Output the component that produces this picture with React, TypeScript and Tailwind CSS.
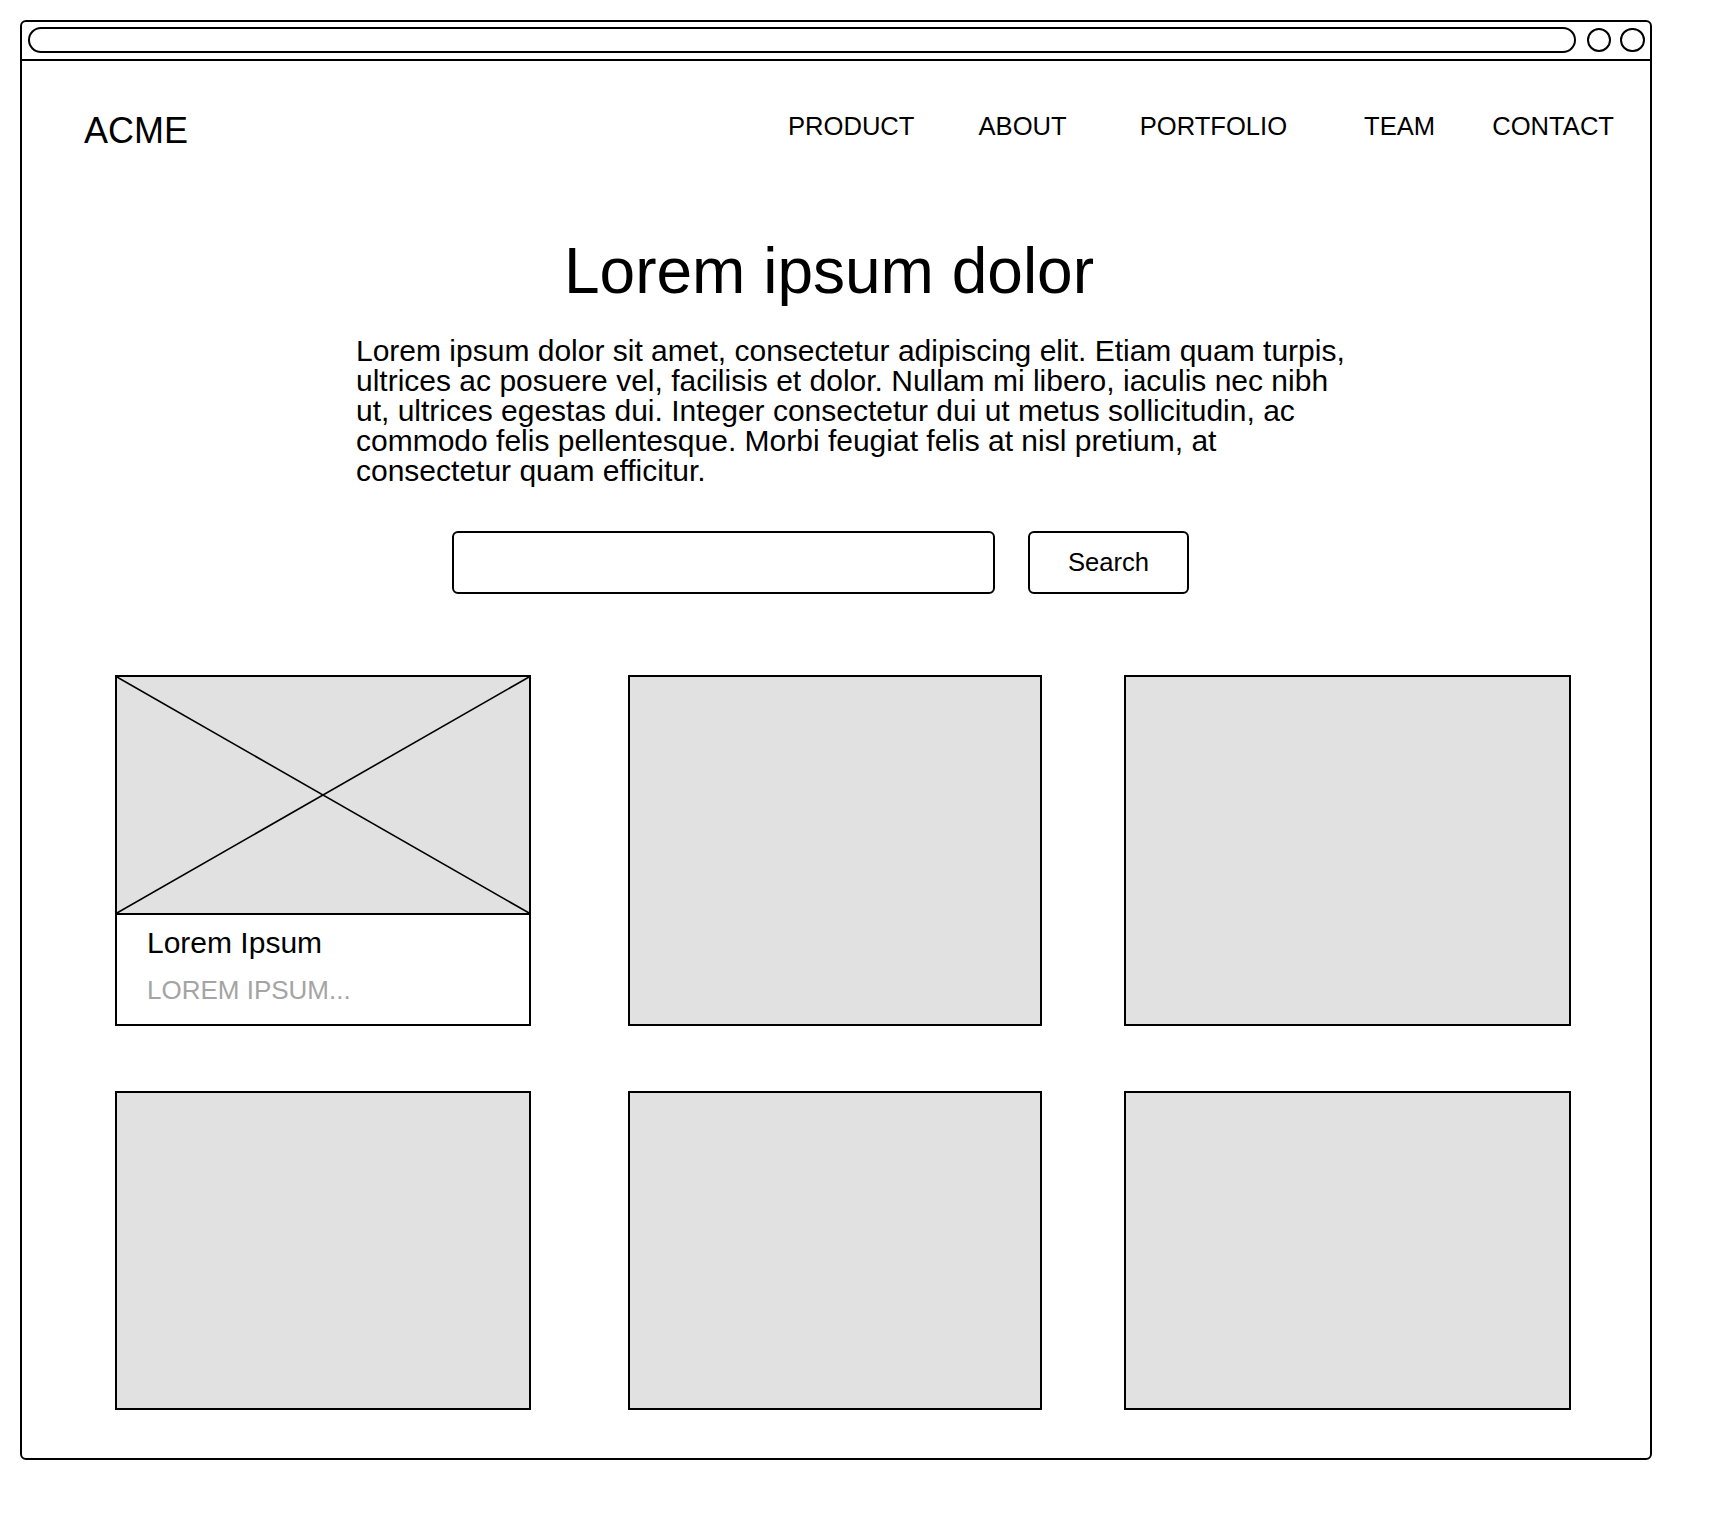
import React from "react";

function ImagePlaceholder() {
  return (
    <svg
      className="absolute inset-0 w-full h-full"
      viewBox="0 0 100 100"
      preserveAspectRatio="none"
    >
      <line x1="0" y1="0" x2="100" y2="100" stroke="#000" strokeWidth="1.6" vectorEffect="non-scaling-stroke" />
      <line x1="100" y1="0" x2="0" y2="100" stroke="#000" strokeWidth="1.6" vectorEffect="non-scaling-stroke" />
    </svg>
  );
}

export default function App() {
  return (
    <div className="w-[1732px] h-[1540px] bg-white p-[20px] text-black font-['Liberation_Sans',Arial,sans-serif]">
      <div className="w-[1632px] h-[1440px] border-2 border-black rounded-[6px] flex flex-col">
        {/* browser top bar */}
        <div className="flex items-start h-[39px] border-b-2 border-black pl-[6px] pt-[5px]">
          <div className="w-[1548px] h-[26px] border-2 border-black rounded-full" />
          <div className="ml-[11px] mt-[1px] w-[24px] h-[24px] border-2 border-black rounded-full" />
          <div className="ml-[9px] mt-[1px] w-[25px] h-[24px] border-2 border-black rounded-full" />
        </div>

        {/* header */}
        <div className="flex items-start pt-[52px] pl-[62px] pr-[36px]">
          <span className="text-[36px] leading-none">ACME</span>
          <nav className="ml-auto flex text-[25.6px] leading-none pt-[1px]">
            <span>PRODUCT</span>
            <span className="ml-[64px]">ABOUT</span>
            <span className="ml-[73px]">PORTFOLIO</span>
            <span className="ml-[77px]">TEAM</span>
            <span className="ml-[57px]">CONTACT</span>
          </nav>
        </div>

        {/* hero */}
        <h1 className="mt-[90px] pl-[542px] text-[64px] leading-none font-normal">Lorem ipsum dolor</h1>
        <p className="mt-[33px] ml-[334px] w-[1002px] text-[30px] leading-[30px]">
          Lorem ipsum dolor sit amet, consectetur adipiscing elit. Etiam quam turpis, ultrices ac posuere vel, facilisis et dolor. Nullam mi libero, iaculis nec nibh ut, ultrices egestas dui. Integer consectetur dui ut metus sollicitudin, ac commodo felis pellentesque. Morbi feugiat felis at nisl pretium, at consectetur quam efficitur.
        </p>

        {/* search */}
        <div className="mt-[45px] ml-[430px] flex">
          <div className="w-[543px] h-[63px] border-2 border-black rounded-[6px]" />
          <div className="ml-[33px] w-[161px] h-[63px] border-2 border-black rounded-[6px] flex items-center justify-center text-[25.6px] leading-none">
            Search
          </div>
        </div>

        {/* cards */}
        <div className="mt-[81px] flex flex-col">
          <div className="flex ml-[93px] h-[351px]">
            <div className="w-[416px] h-full border-2 border-black flex flex-col bg-white">
              <div className="relative h-[238px] bg-[#e1e1e1] border-b-2 border-black">
                <ImagePlaceholder />
              </div>
              <div className="pl-[30px] pt-[13px] flex flex-col">
                <span className="text-[30px] leading-none">Lorem Ipsum</span>
                <span className="mt-[19px] text-[26px] leading-none text-[#a4a4a4]">LOREM IPSUM...</span>
              </div>
            </div>
            <div className="ml-[97px] w-[414px] h-full border-2 border-black bg-[#e1e1e1]" />
            <div className="ml-[82px] w-[447px] h-full border-2 border-black bg-[#e1e1e1]" />
          </div>
          <div className="flex ml-[93px] mt-[65px] h-[319px]">
            <div className="w-[416px] h-full border-2 border-black bg-[#e1e1e1]" />
            <div className="ml-[97px] w-[414px] h-full border-2 border-black bg-[#e1e1e1]" />
            <div className="ml-[82px] w-[447px] h-full border-2 border-black bg-[#e1e1e1]" />
          </div>
        </div>
      </div>
    </div>
  );
}
